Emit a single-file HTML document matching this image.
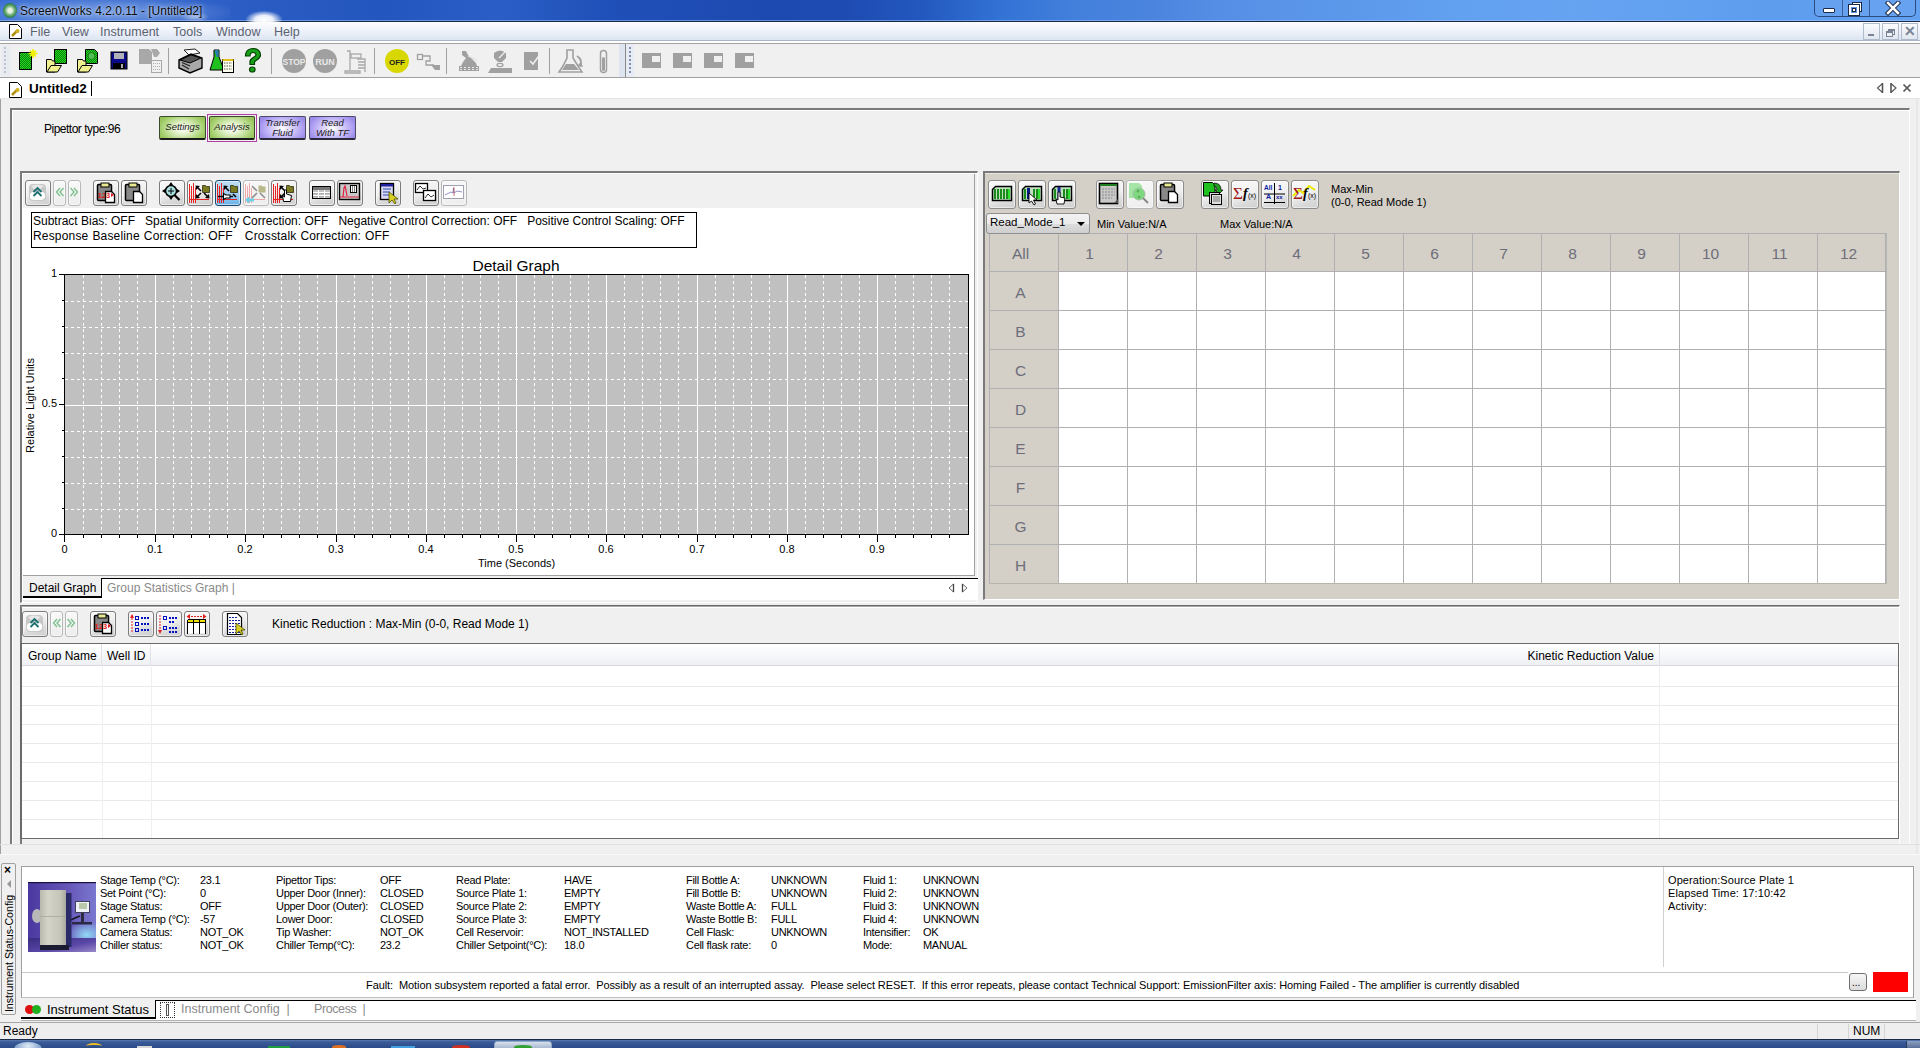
<!DOCTYPE html>
<html><head><meta charset="utf-8">
<style>
*{box-sizing:border-box;margin:0;padding:0}
html,body{width:1920px;height:1048px;overflow:hidden;background:#f0f0f0;font-family:"Liberation Sans",sans-serif;font-size:12px;color:#000;position:relative}
.a{position:absolute}
.t{position:absolute;white-space:pre;line-height:1}
.ms{letter-spacing:-0.5px}
.btn{position:absolute;border:1px solid #8a8a8a;border-radius:3px;background:linear-gradient(#f4f4f4,#dedede)}
.tb{position:absolute;border:1px solid #9a9a9a;border-radius:4px;background:#e8e8e8}
.gh{position:absolute;white-space:pre;line-height:1;font-size:15.5px;color:#6e6e7a;text-align:center}
.st{position:absolute;white-space:pre;line-height:1;font-size:11px;letter-spacing:-0.3px}
</style></head><body>

<!-- Title bar -->
<div class="a" style="left:0;top:0;width:1920px;height:22px;background:linear-gradient(90deg,#3a6ed2 0%,#3466cc 8%,#2a5cc4 13%,#2456bf 20%,#2a5ec6 26%,#1f4fb8 32%,#1c4ab0 40%,#1d4bb2 44%,#2358be 48%,#3272d4 52%,#4380dc 56%,#4a84de 60%,#5690e6 64%,#5c98ea 70%,#62a0f0 76%,#66a4f2 82%,#5e9cee 92%,#62a0f0 100%);border-bottom:1px solid #1a2a44"></div>
<div class="a" style="left:0;top:20px;width:1920px;height:1px;background:rgba(160,200,255,.55)"></div>
<div class="a" style="left:0px;top:0px;width:230px;height:21px;background:radial-gradient(ellipse 60% 80% at 45% 60%,rgba(190,215,250,.45) 0%,rgba(190,215,250,.25) 55%,rgba(190,215,250,0) 100%)"></div>
<div class="a" style="left:246px;top:11px;width:36px;height:11px;border-radius:50% 50% 0 0;background:radial-gradient(ellipse at 50% 80%,rgba(255,255,255,1) 0%,rgba(255,255,255,.9) 35%,rgba(255,255,255,0) 75%)"></div>
<div class="a" style="left:180px;top:12px;width:30px;height:10px;border-radius:50%;background:radial-gradient(ellipse at center,rgba(255,255,255,.5) 0%,rgba(255,255,255,0) 70%)"></div>
<div class="a" style="left:3px;top:3px;width:14px;height:15px;border-radius:50%;background:radial-gradient(circle at 50% 50%,#e8f2e0 20%,#6fb07a 45%,#2a7a48 70%,#1a5a34 100%)"></div>
<div class="t" style="left:20px;top:5px;font-size:12px;color:#0a0a0a;text-shadow:0 0 5px rgba(220,235,255,.9),0 0 2px rgba(220,235,255,.6)">ScreenWorks 4.2.0.11 - [Untitled2]</div>
<!-- caption buttons -->
<div class="a" style="left:1814px;top:-2px;width:102px;height:19px;border:1px solid #2a4a80;border-top:none;border-radius:0 0 5px 5px;background:rgba(120,170,240,.25)"></div>
<div class="a" style="left:1842px;top:0px;width:1px;height:16px;background:#3a5e98"></div>
<div class="a" style="left:1869px;top:0px;width:1px;height:16px;background:#3a5e98"></div>
<div class="a" style="left:1823px;top:8px;width:12px;height:5px;background:#fff;border:1px solid #1d2a44;border-radius:1px"></div>
<div class="a" style="left:1852px;top:2px;width:10px;height:10px;border:1px solid #1d2a44;background:#fff"></div>
<div class="a" style="left:1849px;top:5px;width:10px;height:10px;border:2px solid #fff;outline:1px solid #1d2a44;background:#5a92e0"></div>
<div class="a" style="left:1852px;top:8px;width:4px;height:4px;border:1px solid #1d2a44;background:#fff"></div>
<svg class="a" style="left:1884px;top:1px" width="18" height="15"><path d="M4 2 L14 12 M14 2 L4 12" stroke="#1d2a44" stroke-width="4.5" stroke-linecap="square"/><path d="M4 2 L14 12 M14 2 L4 12" stroke="#fff" stroke-width="2.5" stroke-linecap="square"/></svg>

<!-- Menu bar -->
<div class="a" style="left:0;top:22px;width:1920px;height:19px;background:linear-gradient(#fdfdff,#eef2fa 50%,#dde5f2);border-bottom:1px solid #a9b4c6"></div>
<div class="a" style="left:0;top:41px;width:1920px;height:2px;background:#fff"></div>
<div class="t" style="left:30px;top:26px;font-size:12.5px;color:#5c6270">File</div>
<div class="t" style="left:62px;top:26px;font-size:12.5px;color:#5c6270">View</div>
<div class="t" style="left:100px;top:26px;font-size:12.5px;color:#5c6270">Instrument</div>
<div class="t" style="left:173px;top:26px;font-size:12.5px;color:#5c6270">Tools</div>
<div class="t" style="left:216px;top:26px;font-size:12.5px;color:#5c6270">Window</div>
<div class="t" style="left:274px;top:26px;font-size:12.5px;color:#5c6270">Help</div>
<!-- MDI buttons -->
<div class="a" style="left:1863px;top:23px;width:17px;height:17px;border:1px solid #b0bccc;background:linear-gradient(#fafbfd,#e0e6f0)"></div>
<div class="a" style="left:1882px;top:23px;width:17px;height:17px;border:1px solid #b0bccc;background:linear-gradient(#fafbfd,#e0e6f0)"></div>
<div class="a" style="left:1901px;top:23px;width:17px;height:17px;border:1px solid #b0bccc;background:linear-gradient(#fafbfd,#e0e6f0)"></div>
<div class="a" style="left:1868px;top:34px;width:6px;height:2px;background:#7a8494"></div>
<div class="a" style="left:1888px;top:29px;width:7px;height:6px;border:1px solid #7a8494;border-top-width:2px"></div>
<div class="a" style="left:1886px;top:31px;width:7px;height:6px;border:1px solid #7a8494;border-top-width:2px;background:#eef1f6"></div>
<div class="t" style="left:1904px;top:24px;font-size:14px;font-weight:bold;color:#7a8494">✕</div>

<!-- Toolbar -->
<div class="a" style="left:0;top:43px;width:1920px;height:1px;background:#a0a0a0"></div>
<div class="a" style="left:0;top:44px;width:1920px;height:33px;background:#f0f0f0"></div>
<div class="a" style="left:0;top:77px;width:1920px;height:1px;background:#a0a0a0"></div>

<!-- Doc tab strip -->
<div class="a" style="left:0;top:78px;width:1920px;height:20px;background:#fff"></div>
<div class="t" style="left:29px;top:82px;font-size:13.5px;font-weight:bold;color:#000">Untitled2</div>
<div class="a" style="left:91px;top:81px;width:1px;height:15px;background:#000"></div>
<svg class="a" style="left:1870px;top:80px" width="48" height="16"><path d="M12.5 3.5 L7.5 8 L12.5 12.5" fill="none" stroke="#555" stroke-width="1.1"/><path d="M12.5 3v10" stroke="#555" stroke-width="1.6"/><path d="M21 3.5 L26 8 L21 12.5" fill="none" stroke="#555" stroke-width="1.1"/><path d="M21 3v10" stroke="#555" stroke-width="1.6"/><path d="M33.5 4.5 L40.5 11.5 M40.5 4.5 L33.5 11.5" stroke="#555" stroke-width="1.7"/></svg>
<div class="a" style="left:0;top:98px;width:1920px;height:1px;background:#e4e4e4"></div>

<!-- left edge lines -->
<div class="a" style="left:0;top:99px;width:1px;height:755px;background:#a0a0a0"></div>
<div class="a" style="left:1916px;top:99px;width:4px;height:755px;background:linear-gradient(90deg,#e4e4e4,#f4f4f4)"></div>

<!-- Doc frame -->
<div class="a" style="left:10px;top:108px;width:1900px;height:737px;border-top:2px solid #7a7a7a;border-left:2px solid #7a7a7a;border-right:1px solid #fff;border-bottom:1px solid #fff"></div>
<div class="a" style="left:12px;top:110px;width:1897px;height:734px;border-top:1px solid #fff;border-left:1px solid #fff"></div>

<div class="t ms" style="left:44px;top:123px;font-size:12px">Pipettor type:96</div>

<!-- Pipettor buttons -->
<div class="a" style="left:159px;top:116px;width:47px;height:24px;border:1px solid #3a4a2a;border-bottom:2px solid #1a1a1a;border-radius:2px;background:radial-gradient(ellipse 55% 75% at 50% 55%,#ffffff 0%,#e4f2cc 35%,#a6d070 85%,#98c45c 100%)"></div>
<div class="t" style="left:159px;top:122px;width:47px;text-align:center;font-size:9.5px;font-style:italic;color:#1a1a1a">Settings</div>
<div class="a" style="left:207px;top:114px;width:50px;height:28px;border:1px solid #b040a0"></div>
<div class="a" style="left:209px;top:116px;width:46px;height:24px;border:1px solid #3a4a2a;border-bottom:2px solid #1a1a1a;border-radius:2px;background:radial-gradient(ellipse 55% 75% at 50% 55%,#ffffff 0%,#e4f2cc 35%,#a6d070 85%,#98c45c 100%)"></div>
<div class="t" style="left:209px;top:122px;width:46px;text-align:center;font-size:9.5px;font-style:italic;color:#1a1a1a">Analysis</div>
<div class="a" style="left:259px;top:116px;width:47px;height:24px;border:1px solid #4a4a6a;border-bottom:2px solid #2a2a3a;border-radius:2px;background:radial-gradient(ellipse 55% 75% at 50% 55%,#ffffff 0%,#dcd4fc 35%,#ac9cf2 85%,#9c8ce8 100%)"></div>
<div class="t" style="left:259px;top:118px;width:47px;text-align:center;font-size:9.5px;line-height:10px;font-style:italic;color:#1a1a1a">Transfer
Fluid</div>
<div class="a" style="left:309px;top:116px;width:47px;height:24px;border:1px solid #4a4a6a;border-bottom:2px solid #2a2a3a;border-radius:2px;background:radial-gradient(ellipse 55% 75% at 50% 55%,#ffffff 0%,#dcd4fc 35%,#ac9cf2 85%,#9c8ce8 100%)"></div>
<div class="t" style="left:309px;top:118px;width:47px;text-align:center;font-size:9.5px;line-height:10px;font-style:italic;color:#1a1a1a">Read
With TF</div>

<!-- Left graph panel -->
<div class="a" style="left:20px;top:171px;width:958px;height:432px;border-top:2px solid #7a7a7a;border-left:2px solid #7a7a7a;border-right:1px solid #fff;border-bottom:1px solid #fff"></div>
<div class="a" style="left:22px;top:173px;width:955px;height:429px;border-top:1px solid #fff;border-left:1px solid #fff"></div>
<div class="a" style="left:23px;top:174px;width:952px;height:402px;background:#fff;border:1px solid #a0a0a0;border-top:none;border-left:none"></div>
<div class="a" style="left:23px;top:174px;width:951px;height:34px;background:#f0f0f0"></div>

<!-- correction info box -->
<div class="a" style="left:31px;top:212px;width:666px;height:36px;border:1px solid #000;background:#fff"></div>
<div class="t" style="left:33px;top:215px;font-size:12px">Subtract Bias: OFF   Spatial Uniformity Correction: OFF   Negative Control Correction: OFF   Positive Control Scaling: OFF</div>
<div class="t" style="left:33px;top:230px;font-size:12px;letter-spacing:0.17px;word-spacing:0.5px">Response Baseline Correction: OFF   Crosstalk Correction: OFF</div>
<div class="t" style="left:416px;top:258px;width:200px;text-align:center;font-size:15.5px">Detail Graph</div>
<div class="t" style="left:478px;top:558px;font-size:11px">Time (Seconds)</div>
<div class="t" style="left:-17px;top:400px;width:95px;font-size:11px;transform:rotate(-90deg);transform-origin:47.5px 5.5px;text-align:center">Relative Light Units</div>

<svg class="a" style="left:0;top:0" width="980" height="600" shape-rendering="crispEdges">
<rect x="64" y="274" width="904" height="260" fill="#c0c0c0"/>
<line x1="83.5" y1="275" x2="83.5" y2="534" stroke="#fff" stroke-width="1" stroke-dasharray="3 3"/>
<line x1="101.5" y1="275" x2="101.5" y2="534" stroke="#fff" stroke-width="1" stroke-dasharray="3 3"/>
<line x1="119.5" y1="275" x2="119.5" y2="534" stroke="#fff" stroke-width="1" stroke-dasharray="3 3"/>
<line x1="137.5" y1="275" x2="137.5" y2="534" stroke="#fff" stroke-width="1" stroke-dasharray="3 3"/>
<rect x="155" y="275" width="1" height="259" fill="#fff"/>
<line x1="173.5" y1="275" x2="173.5" y2="534" stroke="#fff" stroke-width="1" stroke-dasharray="3 3"/>
<line x1="191.5" y1="275" x2="191.5" y2="534" stroke="#fff" stroke-width="1" stroke-dasharray="3 3"/>
<line x1="209.5" y1="275" x2="209.5" y2="534" stroke="#fff" stroke-width="1" stroke-dasharray="3 3"/>
<line x1="227.5" y1="275" x2="227.5" y2="534" stroke="#fff" stroke-width="1" stroke-dasharray="3 3"/>
<rect x="245" y="275" width="1" height="259" fill="#fff"/>
<line x1="263.5" y1="275" x2="263.5" y2="534" stroke="#fff" stroke-width="1" stroke-dasharray="3 3"/>
<line x1="281.5" y1="275" x2="281.5" y2="534" stroke="#fff" stroke-width="1" stroke-dasharray="3 3"/>
<line x1="299.5" y1="275" x2="299.5" y2="534" stroke="#fff" stroke-width="1" stroke-dasharray="3 3"/>
<line x1="317.5" y1="275" x2="317.5" y2="534" stroke="#fff" stroke-width="1" stroke-dasharray="3 3"/>
<rect x="336" y="275" width="1" height="259" fill="#fff"/>
<line x1="354.5" y1="275" x2="354.5" y2="534" stroke="#fff" stroke-width="1" stroke-dasharray="3 3"/>
<line x1="372.5" y1="275" x2="372.5" y2="534" stroke="#fff" stroke-width="1" stroke-dasharray="3 3"/>
<line x1="390.5" y1="275" x2="390.5" y2="534" stroke="#fff" stroke-width="1" stroke-dasharray="3 3"/>
<line x1="408.5" y1="275" x2="408.5" y2="534" stroke="#fff" stroke-width="1" stroke-dasharray="3 3"/>
<rect x="426" y="275" width="1" height="259" fill="#fff"/>
<line x1="444.5" y1="275" x2="444.5" y2="534" stroke="#fff" stroke-width="1" stroke-dasharray="3 3"/>
<line x1="462.5" y1="275" x2="462.5" y2="534" stroke="#fff" stroke-width="1" stroke-dasharray="3 3"/>
<line x1="480.5" y1="275" x2="480.5" y2="534" stroke="#fff" stroke-width="1" stroke-dasharray="3 3"/>
<line x1="498.5" y1="275" x2="498.5" y2="534" stroke="#fff" stroke-width="1" stroke-dasharray="3 3"/>
<rect x="516" y="275" width="1" height="259" fill="#fff"/>
<line x1="534.5" y1="275" x2="534.5" y2="534" stroke="#fff" stroke-width="1" stroke-dasharray="3 3"/>
<line x1="552.5" y1="275" x2="552.5" y2="534" stroke="#fff" stroke-width="1" stroke-dasharray="3 3"/>
<line x1="570.5" y1="275" x2="570.5" y2="534" stroke="#fff" stroke-width="1" stroke-dasharray="3 3"/>
<line x1="588.5" y1="275" x2="588.5" y2="534" stroke="#fff" stroke-width="1" stroke-dasharray="3 3"/>
<rect x="606" y="275" width="1" height="259" fill="#fff"/>
<line x1="624.5" y1="275" x2="624.5" y2="534" stroke="#fff" stroke-width="1" stroke-dasharray="3 3"/>
<line x1="642.5" y1="275" x2="642.5" y2="534" stroke="#fff" stroke-width="1" stroke-dasharray="3 3"/>
<line x1="660.5" y1="275" x2="660.5" y2="534" stroke="#fff" stroke-width="1" stroke-dasharray="3 3"/>
<line x1="678.5" y1="275" x2="678.5" y2="534" stroke="#fff" stroke-width="1" stroke-dasharray="3 3"/>
<rect x="697" y="275" width="1" height="259" fill="#fff"/>
<line x1="715.5" y1="275" x2="715.5" y2="534" stroke="#fff" stroke-width="1" stroke-dasharray="3 3"/>
<line x1="733.5" y1="275" x2="733.5" y2="534" stroke="#fff" stroke-width="1" stroke-dasharray="3 3"/>
<line x1="751.5" y1="275" x2="751.5" y2="534" stroke="#fff" stroke-width="1" stroke-dasharray="3 3"/>
<line x1="769.5" y1="275" x2="769.5" y2="534" stroke="#fff" stroke-width="1" stroke-dasharray="3 3"/>
<rect x="787" y="275" width="1" height="259" fill="#fff"/>
<line x1="805.5" y1="275" x2="805.5" y2="534" stroke="#fff" stroke-width="1" stroke-dasharray="3 3"/>
<line x1="823.5" y1="275" x2="823.5" y2="534" stroke="#fff" stroke-width="1" stroke-dasharray="3 3"/>
<line x1="841.5" y1="275" x2="841.5" y2="534" stroke="#fff" stroke-width="1" stroke-dasharray="3 3"/>
<line x1="859.5" y1="275" x2="859.5" y2="534" stroke="#fff" stroke-width="1" stroke-dasharray="3 3"/>
<rect x="877" y="275" width="1" height="259" fill="#fff"/>
<line x1="895.5" y1="275" x2="895.5" y2="534" stroke="#fff" stroke-width="1" stroke-dasharray="3 3"/>
<line x1="913.5" y1="275" x2="913.5" y2="534" stroke="#fff" stroke-width="1" stroke-dasharray="3 3"/>
<line x1="931.5" y1="275" x2="931.5" y2="534" stroke="#fff" stroke-width="1" stroke-dasharray="3 3"/>
<line x1="949.5" y1="275" x2="949.5" y2="534" stroke="#fff" stroke-width="1" stroke-dasharray="3 3"/>
<line x1="65" y1="301.5" x2="968" y2="301.5" stroke="#fff" stroke-width="1" stroke-dasharray="3 3"/>
<line x1="65" y1="327.5" x2="968" y2="327.5" stroke="#fff" stroke-width="1" stroke-dasharray="3 3"/>
<line x1="65" y1="353.5" x2="968" y2="353.5" stroke="#fff" stroke-width="1" stroke-dasharray="3 3"/>
<line x1="65" y1="379.5" x2="968" y2="379.5" stroke="#fff" stroke-width="1" stroke-dasharray="3 3"/>
<rect x="65" y="405" width="903" height="1" fill="#fff"/>
<line x1="65" y1="431.5" x2="968" y2="431.5" stroke="#fff" stroke-width="1" stroke-dasharray="3 3"/>
<line x1="65" y1="457.5" x2="968" y2="457.5" stroke="#fff" stroke-width="1" stroke-dasharray="3 3"/>
<line x1="65" y1="483.5" x2="968" y2="483.5" stroke="#fff" stroke-width="1" stroke-dasharray="3 3"/>
<line x1="65" y1="509.5" x2="968" y2="509.5" stroke="#fff" stroke-width="1" stroke-dasharray="3 3"/>
<rect x="64" y="274" width="905" height="1" fill="#000"/>
<rect x="968" y="274" width="1" height="261" fill="#000"/>
<rect x="64" y="274" width="1" height="261" fill="#000"/>
<rect x="64" y="534" width="905" height="1" fill="#000"/>
<rect x="64" y="535" width="1" height="7" fill="#000"/>
<rect x="83" y="535" width="1" height="3" fill="#000"/>
<rect x="101" y="535" width="1" height="3" fill="#000"/>
<rect x="119" y="535" width="1" height="3" fill="#000"/>
<rect x="137" y="535" width="1" height="3" fill="#000"/>
<rect x="155" y="535" width="1" height="7" fill="#000"/>
<rect x="173" y="535" width="1" height="3" fill="#000"/>
<rect x="191" y="535" width="1" height="3" fill="#000"/>
<rect x="209" y="535" width="1" height="3" fill="#000"/>
<rect x="227" y="535" width="1" height="3" fill="#000"/>
<rect x="245" y="535" width="1" height="7" fill="#000"/>
<rect x="263" y="535" width="1" height="3" fill="#000"/>
<rect x="281" y="535" width="1" height="3" fill="#000"/>
<rect x="299" y="535" width="1" height="3" fill="#000"/>
<rect x="317" y="535" width="1" height="3" fill="#000"/>
<rect x="336" y="535" width="1" height="7" fill="#000"/>
<rect x="354" y="535" width="1" height="3" fill="#000"/>
<rect x="372" y="535" width="1" height="3" fill="#000"/>
<rect x="390" y="535" width="1" height="3" fill="#000"/>
<rect x="408" y="535" width="1" height="3" fill="#000"/>
<rect x="426" y="535" width="1" height="7" fill="#000"/>
<rect x="444" y="535" width="1" height="3" fill="#000"/>
<rect x="462" y="535" width="1" height="3" fill="#000"/>
<rect x="480" y="535" width="1" height="3" fill="#000"/>
<rect x="498" y="535" width="1" height="3" fill="#000"/>
<rect x="516" y="535" width="1" height="7" fill="#000"/>
<rect x="534" y="535" width="1" height="3" fill="#000"/>
<rect x="552" y="535" width="1" height="3" fill="#000"/>
<rect x="570" y="535" width="1" height="3" fill="#000"/>
<rect x="588" y="535" width="1" height="3" fill="#000"/>
<rect x="606" y="535" width="1" height="7" fill="#000"/>
<rect x="624" y="535" width="1" height="3" fill="#000"/>
<rect x="642" y="535" width="1" height="3" fill="#000"/>
<rect x="660" y="535" width="1" height="3" fill="#000"/>
<rect x="678" y="535" width="1" height="3" fill="#000"/>
<rect x="697" y="535" width="1" height="7" fill="#000"/>
<rect x="715" y="535" width="1" height="3" fill="#000"/>
<rect x="733" y="535" width="1" height="3" fill="#000"/>
<rect x="751" y="535" width="1" height="3" fill="#000"/>
<rect x="769" y="535" width="1" height="3" fill="#000"/>
<rect x="787" y="535" width="1" height="7" fill="#000"/>
<rect x="805" y="535" width="1" height="3" fill="#000"/>
<rect x="823" y="535" width="1" height="3" fill="#000"/>
<rect x="841" y="535" width="1" height="3" fill="#000"/>
<rect x="859" y="535" width="1" height="3" fill="#000"/>
<rect x="877" y="535" width="1" height="7" fill="#000"/>
<rect x="895" y="535" width="1" height="3" fill="#000"/>
<rect x="913" y="535" width="1" height="3" fill="#000"/>
<rect x="931" y="535" width="1" height="3" fill="#000"/>
<rect x="949" y="535" width="1" height="3" fill="#000"/>
<rect x="59" y="274" width="5" height="1" fill="#000"/>
<rect x="62" y="300" width="2" height="1" fill="#000"/>
<rect x="62" y="326" width="2" height="1" fill="#000"/>
<rect x="62" y="352" width="2" height="1" fill="#000"/>
<rect x="62" y="378" width="2" height="1" fill="#000"/>
<rect x="59" y="404" width="5" height="1" fill="#000"/>
<rect x="62" y="430" width="2" height="1" fill="#000"/>
<rect x="62" y="456" width="2" height="1" fill="#000"/>
<rect x="62" y="482" width="2" height="1" fill="#000"/>
<rect x="62" y="508" width="2" height="1" fill="#000"/>
<rect x="59" y="534" width="5" height="1" fill="#000"/>
</svg>
<div class="t" style="left:34.5px;top:544px;width:60px;text-align:center;font-size:11px">0</div>
<div class="t" style="left:125px;top:544px;width:60px;text-align:center;font-size:11px">0.1</div>
<div class="t" style="left:215px;top:544px;width:60px;text-align:center;font-size:11px">0.2</div>
<div class="t" style="left:306px;top:544px;width:60px;text-align:center;font-size:11px">0.3</div>
<div class="t" style="left:396px;top:544px;width:60px;text-align:center;font-size:11px">0.4</div>
<div class="t" style="left:486px;top:544px;width:60px;text-align:center;font-size:11px">0.5</div>
<div class="t" style="left:576px;top:544px;width:60px;text-align:center;font-size:11px">0.6</div>
<div class="t" style="left:667px;top:544px;width:60px;text-align:center;font-size:11px">0.7</div>
<div class="t" style="left:757px;top:544px;width:60px;text-align:center;font-size:11px">0.8</div>
<div class="t" style="left:847px;top:544px;width:60px;text-align:center;font-size:11px">0.9</div>
<div class="t" style="left:17px;top:268px;width:40px;text-align:right;font-size:11px">1</div>
<div class="t" style="left:17px;top:398px;width:40px;text-align:right;font-size:11px">0.5</div>
<div class="t" style="left:17px;top:528px;width:40px;text-align:right;font-size:11px">0</div>
<div class="a" style="left:983px;top:171px;width:917px;height:429px;background:#d4d0c8;border-top:2px solid #7a7a7a;border-left:2px solid #7a7a7a;border-right:1px solid #fff;border-bottom:1px solid #fff"></div>
<div class="a" style="left:985px;top:173px;width:914px;height:1px;background:#e8e6e0"></div>
<svg class="a" style="left:0;top:0" width="1920" height="600" shape-rendering="crispEdges">
<rect x="1058" y="271" width="828" height="312" fill="#fff"/>
<rect x="989" y="233" width="69" height="350" fill="#d4d0c8"/>
<rect x="1058" y="233" width="828" height="38" fill="#d4d0c8"/>
<rect x="989" y="233" width="1" height="350" fill="#b0b0b0"/>
<rect x="1058" y="233" width="1" height="350" fill="#b0b0b0"/>
<rect x="1127" y="233" width="1" height="350" fill="#b0b0b0"/>
<rect x="1196" y="233" width="1" height="350" fill="#b0b0b0"/>
<rect x="1265" y="233" width="1" height="350" fill="#b0b0b0"/>
<rect x="1334" y="233" width="1" height="350" fill="#b0b0b0"/>
<rect x="1403" y="233" width="1" height="350" fill="#b0b0b0"/>
<rect x="1472" y="233" width="1" height="350" fill="#b0b0b0"/>
<rect x="1541" y="233" width="1" height="350" fill="#b0b0b0"/>
<rect x="1610" y="233" width="1" height="350" fill="#b0b0b0"/>
<rect x="1679" y="233" width="1" height="350" fill="#b0b0b0"/>
<rect x="1748" y="233" width="1" height="350" fill="#b0b0b0"/>
<rect x="1817" y="233" width="1" height="350" fill="#b0b0b0"/>
<rect x="1885" y="233" width="1" height="350" fill="#b0b0b0"/>
<rect x="1886" y="233" width="1" height="350" fill="#b8b8b8"/>
<rect x="989" y="233" width="898" height="1" fill="#b0b0b0"/>
<rect x="989" y="271" width="898" height="1" fill="#b0b0b0"/>
<rect x="989" y="310" width="898" height="1" fill="#b0b0b0"/>
<rect x="989" y="349" width="898" height="1" fill="#b0b0b0"/>
<rect x="989" y="388" width="898" height="1" fill="#b0b0b0"/>
<rect x="989" y="427" width="898" height="1" fill="#b0b0b0"/>
<rect x="989" y="466" width="898" height="1" fill="#b0b0b0"/>
<rect x="989" y="505" width="898" height="1" fill="#b0b0b0"/>
<rect x="989" y="544" width="898" height="1" fill="#b0b0b0"/>
<rect x="989" y="583" width="898" height="1" fill="#b0b0b0"/>
<rect x="989" y="583" width="898" height="1" fill="#b8b4ac"/>
</svg>
<div class="gh" style="left:986px;top:246px;width:69px">All</div>
<div class="gh" style="left:1055px;top:246px;width:69px">1</div>
<div class="gh" style="left:1124px;top:246px;width:69px">2</div>
<div class="gh" style="left:1193px;top:246px;width:69px">3</div>
<div class="gh" style="left:1262px;top:246px;width:69px">4</div>
<div class="gh" style="left:1331px;top:246px;width:69px">5</div>
<div class="gh" style="left:1400px;top:246px;width:69px">6</div>
<div class="gh" style="left:1469px;top:246px;width:69px">7</div>
<div class="gh" style="left:1538px;top:246px;width:69px">8</div>
<div class="gh" style="left:1607px;top:246px;width:69px">9</div>
<div class="gh" style="left:1676px;top:246px;width:69px">10</div>
<div class="gh" style="left:1745px;top:246px;width:69px">11</div>
<div class="gh" style="left:1814px;top:246px;width:69px">12</div>
<div class="gh" style="left:986px;top:285px;width:69px">A</div>
<div class="gh" style="left:986px;top:324px;width:69px">B</div>
<div class="gh" style="left:986px;top:363px;width:69px">C</div>
<div class="gh" style="left:986px;top:402px;width:69px">D</div>
<div class="gh" style="left:986px;top:441px;width:69px">E</div>
<div class="gh" style="left:986px;top:480px;width:69px">F</div>
<div class="gh" style="left:986px;top:519px;width:69px">G</div>
<div class="gh" style="left:986px;top:558px;width:69px">H</div>
<div class="a" style="left:986px;top:213px;width:104px;height:21px;border:1px solid #8e8f8f;border-radius:3px;background:linear-gradient(#f2f2f2 0%,#ebebeb 50%,#dddddd 51%,#cfcfcf 100%)"></div>
<div class="t" style="left:990px;top:217px;font-size:11.5px">Read_Mode_1</div>
<div class="a" style="left:1077px;top:222px;width:0;height:0;border-left:4px solid transparent;border-right:4px solid transparent;border-top:4px solid #000"></div>
<div class="t" style="left:1097px;top:219px;font-size:11px">Min Value:N/A</div>
<div class="t" style="left:1220px;top:219px;font-size:11px">Max Value:N/A</div>
<div class="t" style="left:1331px;top:183px;font-size:11px;line-height:13px">Max-Min
(0-0, Read Mode 1)</div>
<!-- graph tabs -->
<div class="a" style="left:23px;top:578px;width:955px;height:22px;background:#fff;border-top:1px solid #000"></div>
<div class="a" style="left:23px;top:578px;width:79px;height:20px;background:#f0f0f0;border-right:1px solid #000;border-bottom:2px solid #000"></div>
<div class="t" style="left:29px;top:582px;font-size:12px">Detail Graph</div>
<div class="t" style="left:107px;top:582px;font-size:12px;color:#8a8a8a">Group Statistics Graph |</div>
<svg class="a" style="left:945px;top:581px" width="25" height="14"><path d="M8.5 3 L4 7 L8.5 11Z" fill="none" stroke="#666" stroke-width="1"/><path d="M8.5 3v8" stroke="#444" stroke-width="1.3"/><path d="M17.5 3 L22 7 L17.5 11Z" fill="none" stroke="#666" stroke-width="1"/><path d="M17.5 3v8" stroke="#444" stroke-width="1.3"/></svg>

<div class="a" style="left:20px;top:605px;width:1880px;height:240px;border-top:1px solid #6a6a6a;border-left:2px solid #7a7a7a;border-right:1px solid #fff;border-bottom:1px solid #fff"></div><div class="a" style="left:21px;top:606px;width:1878px;height:1px;background:#a8a8a8"></div>
<div class="a" style="left:22px;top:607px;width:1877px;height:1px;background:#fff"></div>
<div class="a" style="left:20px;top:643px;width:1879px;height:196px;background:#fff;border-top:1px solid #6a6a6a;border-left:2px solid #6a6a6a;border-bottom:1px solid #6a6a6a;border-right:1px solid #6a6a6a"></div>
<div class="a" style="left:22px;top:644px;width:1876px;height:22px;background:linear-gradient(#ffffff 0%,#f7f8fa 50%,#eef0f3 100%);border-bottom:1px solid #d8dade"></div>
<div class="a" style="left:101px;top:644px;width:1px;height:22px;background:#e0e2e6"></div>
<div class="a" style="left:150px;top:644px;width:1px;height:22px;background:#e0e2e6"></div>
<div class="a" style="left:1659px;top:644px;width:1px;height:22px;background:#e0e2e6"></div>
<div class="a" style="left:22px;top:686px;width:1876px;height:1px;background:#eaeaea"></div>
<div class="a" style="left:22px;top:705px;width:1876px;height:1px;background:#eaeaea"></div>
<div class="a" style="left:22px;top:724px;width:1876px;height:1px;background:#eaeaea"></div>
<div class="a" style="left:22px;top:743px;width:1876px;height:1px;background:#eaeaea"></div>
<div class="a" style="left:22px;top:762px;width:1876px;height:1px;background:#eaeaea"></div>
<div class="a" style="left:22px;top:781px;width:1876px;height:1px;background:#eaeaea"></div>
<div class="a" style="left:22px;top:800px;width:1876px;height:1px;background:#eaeaea"></div>
<div class="a" style="left:22px;top:819px;width:1876px;height:1px;background:#eaeaea"></div>
<div class="a" style="left:102px;top:667px;width:1px;height:171px;background:#efefef"></div>
<div class="a" style="left:151px;top:667px;width:1px;height:171px;background:#efefef"></div>
<div class="a" style="left:1659px;top:667px;width:1px;height:171px;background:#efefef"></div>
<div class="t" style="left:28px;top:650px;font-size:12px">Group Name</div>
<div class="t" style="left:107px;top:650px;font-size:12px">Well ID</div>
<div class="t" style="left:1454px;top:650px;width:200px;text-align:right;font-size:12px">Kinetic Reduction Value</div>
<div class="t" style="left:272px;top:618px;font-size:12px">Kinetic Reduction : Max-Min (0-0, Read Mode 1)</div>
<!-- bottom area -->
<div class="a" style="left:0;top:844px;width:1920px;height:1px;background:#e0e0e0"></div><div class="a" style="left:0;top:854px;width:1920px;height:1px;background:#fafafa"></div>
<!-- side tab -->
<div class="a" style="left:1px;top:863px;width:15px;height:152px;border:1px solid #a0a0a0;border-radius:2px;background:#f0f0f0"></div>
<div class="t" style="left:4px;top:864px;font-size:12px;font-weight:bold">×</div>
<div class="a" style="left:7px;top:880px;width:0;height:0;border-top:4px solid transparent;border-bottom:4px solid transparent;border-right:4px solid #999"></div>
<div class="t" style="left:-50px;top:947px;width:120px;height:13px;font-size:10.6px;transform:rotate(-90deg);transform-origin:60px 6.5px;text-align:center">Instrument Status-Config</div>

<!-- status panel -->
<div class="a" style="left:21px;top:866px;width:1893px;height:132px;background:#fff;border-top:1px solid #a0a0a0;border-left:1px solid #a0a0a0;border-right:1px solid #a0a0a0;border-bottom:1px solid #c0c0c0"></div>
<div class="a" style="left:22px;top:972px;width:1826px;height:1px;background:#c8c8c8"></div>
<div class="a" style="left:1663px;top:867px;width:1px;height:100px;background:#d0d0d0"></div>

<!-- instrument picture -->
<svg class="a" style="left:28px;top:882px" width="68" height="70">
<defs>
<linearGradient id="ipbg" x1="0" y1="0" x2="1" y2="0"><stop offset="0" stop-color="#4a38a0"/><stop offset=".6" stop-color="#6858b8"/><stop offset="1" stop-color="#7a78d0"/></linearGradient>
<radialGradient id="ipglow" cx=".75" cy=".85" r=".5"><stop offset="0" stop-color="#90d8f4" stop-opacity="1"/><stop offset="1" stop-color="#90d8f4" stop-opacity="0"/></radialGradient>
<linearGradient id="ipfloor" x1="0" y1="0" x2="1" y2="1"><stop offset="0" stop-color="#3a2c80"/><stop offset=".6" stop-color="#5a48a8"/><stop offset="1" stop-color="#9888c8"/></linearGradient>
<linearGradient id="ipcab" x1="0" y1="0" x2="1" y2="0"><stop offset="0" stop-color="#b8b8ac"/><stop offset=".3" stop-color="#d4d4c8"/><stop offset=".8" stop-color="#c4c4b8"/><stop offset="1" stop-color="#a8a8a0"/></linearGradient>
</defs>
<rect width="68" height="70" fill="url(#ipbg)"/>
<rect x="30" y="30" width="38" height="27" fill="url(#ipglow)"/>
<rect y="56" width="68" height="14" fill="url(#ipfloor)"/>
<rect width="68" height="1.2" fill="#1a1040"/>
<ellipse cx="9" cy="34" rx="5" ry="7" fill="#b8b8b8"/>
<rect x="12" y="8" width="26" height="55" fill="url(#ipcab)"/>
<rect x="12" y="34" width="26" height=".8" fill="#a8a89c"/>
<rect x="38" y="11" width="5.5" height="54" fill="#2a2a68"/>
<rect x="12" y="63" width="29" height="5" fill="#1a1a30"/>
<path d="M43 38 L47 36 L52 34" stroke="#1a1a2a" stroke-width="1.6" fill="none"/>
<rect x="47.5" y="19.5" width="14" height="11" fill="#f0f0f8" stroke="#404058" stroke-width="1"/>
<rect x="51" y="21" width="8" height="6" fill="#b8c8a8"/>
<rect x="44" y="40" width="20" height="2.5" fill="#2a2a48"/>
<rect x="53" y="31" width="3" height="9" fill="#2a2a40"/>
</svg>
<div class="st" style="left:100px;top:874px;line-height:13px">Stage Temp (°C):
Set Point (°C):
Stage Status:
Camera Temp (°C):
Camera Status:
Chiller status:</div>
<div class="st" style="left:200px;top:874px;line-height:13px">23.1
0
OFF
-57
NOT_OK
NOT_OK</div>
<div class="st" style="left:276px;top:874px;line-height:13px">Pipettor Tips:
Upper Door (Inner):
Upper Door (Outer):
Lower Door:
Tip Washer:
Chiller Temp(°C):</div>
<div class="st" style="left:380px;top:874px;line-height:13px">OFF
CLOSED
CLOSED
CLOSED
NOT_OK
23.2</div>
<div class="st" style="left:456px;top:874px;line-height:13px">Read Plate:
Source Plate 1:
Source Plate 2:
Source Plate 3:
Cell Reservoir:
Chiller Setpoint(°C):</div>
<div class="st" style="left:564px;top:874px;line-height:13px">HAVE
EMPTY
EMPTY
EMPTY
NOT_INSTALLED
18.0</div>
<div class="st" style="left:686px;top:874px;line-height:13px">Fill Bottle A:
Fill Bottle B:
Waste Bottle A:
Waste Bottle B:
Cell Flask:
Cell flask rate:</div>
<div class="st" style="left:771px;top:874px;line-height:13px">UNKNOWN
UNKNOWN
FULL
FULL
UNKNOWN
0</div>
<div class="st" style="left:863px;top:874px;line-height:13px">Fluid 1:
Fluid 2:
Fluid 3:
Fluid 4:
Intensifier:
Mode:</div>
<div class="st" style="left:923px;top:874px;line-height:13px">UNKNOWN
UNKNOWN
UNKNOWN
UNKNOWN
OK
MANUAL</div>
<div class="st" style="left:1668px;top:874px;line-height:13px;letter-spacing:0.1px">Operation:Source Plate 1
Elapsed Time: 17:10:42
Activity:</div>

<div class="t" style="left:366px;top:980px;font-size:11px;letter-spacing:-0.08px">Fault:  Motion subsystem reported a fatal error.  Possibly as a result of an interrupted assay.  Please select RESET.  If this error repeats, please contact Technical Support: EmissionFilter axis: Homing Failed - The amplifier is currently disabled</div>
<div class="a" style="left:1849px;top:973px;width:18px;height:18px;border:1px solid #707070;border-radius:3px;background:linear-gradient(#f6f6f6,#dcdcdc)"></div>
<div class="t" style="left:1852px;top:978px;font-size:10px">...</div>
<div class="a" style="left:1873px;top:972px;width:35px;height:20px;background:#ff0000"></div>

<!-- bottom tabs -->
<div class="a" style="left:21px;top:1000px;width:1895px;height:21px;background:#fff;border-top:1px solid #000;border-bottom:1px solid #b0b0b0"></div>
<div class="a" style="left:21px;top:1000px;width:135px;height:19px;background:#f0f0f0;border-right:1px solid #000;border-bottom:2px solid #000"></div>
<div class="a" style="left:25px;top:1005px;width:9px;height:9px;border-radius:50%;background:#e01010"></div>
<div class="a" style="left:32px;top:1005px;width:9px;height:9px;border-radius:50%;background:#20b020"></div>
<div class="t" style="left:47px;top:1003px;font-size:13px">Instrument Status</div>
<div class="a" style="left:160px;top:1002px;width:15px;height:16px;border:1px dotted #333"></div>
<div class="a" style="left:166px;top:1004px;width:3px;height:12px;border:1px solid #555"></div>
<div class="t" style="left:181px;top:1003px;font-size:12.5px;color:#8a8a8a">Instrument Config  |</div>
<div class="t" style="left:314px;top:1003px;font-size:12.5px;letter-spacing:-0.4px;color:#8a8a8a">Process  |</div>

<!-- status bar -->
<div class="a" style="left:0;top:1022px;width:1920px;height:18px;background:#efeeee;border-top:1px solid #a8a8a8"></div>
<div class="t" style="left:3px;top:1025px;font-size:12px">Ready</div>
<div class="a" style="left:1817px;top:1024px;width:1px;height:15px;background:#d4d4d4"></div>
<div class="a" style="left:1848px;top:1024px;width:1px;height:15px;background:#d4d4d4"></div>
<div class="a" style="left:1884px;top:1024px;width:1px;height:15px;background:#d4d4d4"></div>
<div class="t" style="left:1853px;top:1025px;font-size:12px">NUM</div>

<!-- taskbar -->
<div class="a" style="left:0;top:1039px;width:1920px;height:9px;background:linear-gradient(#1a2a48 0,#1a2a48 1px,#5a7ab0 1px,#3a5a98 3px,#2a4a88 9px)"></div>
<div class="a" style="left:14px;top:1042px;width:28px;height:14px;border-radius:50%;background:radial-gradient(ellipse at 50% 30%,#e0ecf8,#8aa8d0 60%,#4a6aa0)"></div>
<div class="a" style="left:86px;top:1043px;width:16px;height:6px;border-top:2px solid #f0c020;border-radius:50% 50% 0 0"></div>
<div class="a" style="left:137px;top:1046px;width:15px;height:3px;background:#d8d8d8"></div>
<div class="a" style="left:268px;top:1046px;width:22px;height:3px;background:#20a040"></div>
<div class="a" style="left:332px;top:1045px;width:14px;height:4px;border-radius:50% 50% 0 0;background:#e07020"></div>
<div class="a" style="left:391px;top:1046px;width:24px;height:3px;background:#40a0e0"></div>
<div class="a" style="left:452px;top:1045px;width:18px;height:4px;border-radius:50% 50% 0 0;background:#d03020"></div>
<div class="a" style="left:494px;top:1041px;width:58px;height:8px;border:1px solid #90a8c8;border-radius:3px 3px 0 0;background:linear-gradient(#d8e0ec,#a8b8d0)"></div>
<div class="a" style="left:514px;top:1045px;width:18px;height:4px;border-radius:50% 50% 0 0;background:#30a030"></div>
<div class="a" style="left:1906px;top:1041px;width:14px;height:7px;background:linear-gradient(#8aa0c0,#5a7098);border-left:1px solid #2a3a58"></div>


<!-- ===== main toolbar icons ===== -->
<svg class="a" style="left:0;top:0" width="780" height="80">
<defs>
<pattern id="gchk" width="2" height="2" patternUnits="userSpaceOnUse"><rect width="2" height="2" fill="#008a00"/><rect width="1" height="1" fill="#28d028"/><rect x="1" y="1" width="1" height="1" fill="#28d028"/></pattern>
</defs>
<!-- grip -->
<g fill="#9aa4b8"><rect x="4" y="47" width="2" height="2"/><rect x="4" y="51" width="2" height="2"/><rect x="4" y="55" width="2" height="2"/><rect x="4" y="59" width="2" height="2"/><rect x="4" y="63" width="2" height="2"/><rect x="4" y="67" width="2" height="2"/><rect x="4" y="71" width="2" height="2"/></g>
<rect x="1" y="45" width="10" height="31" fill="#e0e6f0" opacity=".5"/>
<!-- 1 new -->
<rect x="19.5" y="52.5" width="12" height="17" fill="url(#gchk)" stroke="#000"/>
<path d="M33 49 L33 58 M28.5 53.5 L37.5 53.5 M30 50.5 L36 56.5 M36 50.5 L30 56.5" stroke="#f0f000" stroke-width="1.6"/>
<!-- 2 open -->
<rect x="54.5" y="49.5" width="12" height="14" fill="url(#gchk)" stroke="#000"/>
<path d="M46.5 59.5 L51.5 59.5 L52.5 61 L55 61 L55 72 L46.5 72 Z" fill="#f0f090" stroke="#000"/>
<path d="M47 72 L51 65.5 L61.5 65.5 L57.5 72 Z" fill="#f0f090" stroke="#000"/>
<!-- 3 open2 -->
<path d="M85.5 49.5 L94.5 49.5 L97.5 52.5 L97.5 63.5 L85.5 63.5 Z" fill="url(#gchk)" stroke="#000"/>
<circle cx="91.5" cy="56" r="3.5" fill="#50c050" stroke="#208020"/>
<path d="M77.5 59.5 L82.5 59.5 L83.5 61 L86 61 L86 72 L77.5 72 Z" fill="#f0f090" stroke="#000"/>
<path d="M78 72 L82 65.5 L92.5 65.5 L88.5 72 Z" fill="#f0f090" stroke="#000"/>
<!-- 4 save -->
<rect x="111" y="52" width="16" height="17" fill="#0a0a8a" stroke="#000" stroke-width="1"/>
<rect x="114" y="53" width="10" height="6" fill="#b0b0b8"/>
<rect x="113" y="63" width="12" height="6" fill="#000"/>
<rect x="121" y="64" width="2" height="4" fill="#aaa"/>
<!-- 5 disabled -->
<path d="M139 49 L149 49 L152 52 L152 64 L139 64 Z" fill="#a8a8a8"/>
<path d="M151 49 L157 49 L160 53 L157 57 L154 57 Z" fill="#a8a8a8"/>
<rect x="151.5" y="60.5" width="10" height="12" fill="#f0f0f0" stroke="#a8a8a8"/>
<path d="M153 63.5h7M153 66.5h7M153 69.5h7" stroke="#b0b0b0" stroke-dasharray="1 1"/>
<rect x="168" y="48" width="1" height="26" fill="#a0a0a0"/>
<!-- 6 printer -->
<path d="M184 50 L195 49 L200 53 L189 55 Z" fill="#fff" stroke="#222"/>
<path d="M179 60 L191 54 L202 58 L202 68 L190 73 L179 68 Z" fill="#a8a8a8" stroke="#000" stroke-width="1.4"/>
<path d="M180 60 L191 55 L201 58 L190 63 Z" fill="#555" stroke="#000"/>
<path d="M182 65 L189 69 M182 62.5 L190 66" stroke="#222" stroke-width="1.2"/>
<!-- 7 flask -->
<path d="M214 50 L219 50 L219 57 L224 70 L210 70 L214 57 Z" fill="#20c020" stroke="#000"/>
<path d="M214.5 50 L218.5 50 L218.5 57 L216.5 57 Z" fill="#2a7ab0"/>
<rect x="222.5" y="59.5" width="11" height="13" fill="#fffff0" stroke="#000"/>
<path d="M224 63h8M224 66h8M224 69h8" stroke="#555" stroke-dasharray="1.5 1"/>
<rect x="222.5" y="59" width="11" height="2" fill="#e0c020"/>
<!-- 8 help -->
<path d="M245.5 56 C245.5 50 250 48.5 253 48.5 C257.5 48.5 260.5 51 260.5 55 C260.5 59 255.5 60 254.5 62 L254.5 64.5 L250 64.5 L250 61.5 C250 58 256 57 256 55 C256 53 255 52.5 253 52.5 C251 52.5 250 53.5 250 56 Z" fill="#18a018" stroke="#004000" stroke-width="1.2"/>
<ellipse cx="252.3" cy="69.5" rx="2.8" ry="2.5" fill="#18a018" stroke="#004000" stroke-width="1.2"/>
<rect x="271" y="48" width="1" height="26" fill="#a0a0a0"/>
<!-- 9 stop / 10 run -->
<circle cx="294" cy="61" r="12" fill="#a0a0a0"/>
<text x="294" y="65" font-family="Liberation Sans" font-size="8.5" font-weight="bold" fill="#e8e8e8" text-anchor="middle">STOP</text>
<circle cx="325" cy="61" r="12" fill="#a0a0a0"/>
<text x="325" y="65" font-family="Liberation Sans" font-size="9" font-weight="bold" fill="#e8e8e8" text-anchor="middle">RUN</text>
<!-- 11 instrument gray -->
<g fill="none" stroke="#a8a8a8" stroke-width="1.3"><path d="M347 51 L350 51 L350 70 M345 71 L360 71 L360 73 L345 73 Z"/><rect x="351" y="54" width="10" height="4"/><path d="M357 59 L365 59 L365 72 M358 62h7M358 65h7M358 68h7"/></g>
<rect x="374" y="48" width="1" height="26" fill="#a0a0a0"/>
<!-- 12 OFF -->
<circle cx="397" cy="61" r="12" fill="#d8d800"/>
<text x="397" y="64.5" font-family="Liberation Sans" font-size="8" font-weight="bold" fill="#222" text-anchor="middle">OFF</text>
<!-- 13 pipe gray -->
<g fill="none" stroke="#a0a0a0" stroke-width="1.3"><rect x="417.5" y="54.5" width="5" height="5"/><path d="M423 56h7v5h-4v4h8"/></g>
<path d="M431 65 L440 65 L440 70 L435 70 Z" fill="#a0a0a0"/>
<rect x="446" y="48" width="1" height="26" fill="#a0a0a0"/>
<!-- 14 gray icons -->
<g fill="#a0a0a0">
<rect x="459" y="66" width="20" height="5"/>
<path d="M462 51 L466 51 L468 55 L476 63 L477 66 L461 66 L463 62 L466 58 L462 55Z"/>
<rect x="493" y="68" width="19" height="5"/><path d="M488 73 L491 68 L493 68 L493 73Z"/>
<path d="M494 53 Q500 48 506 53 L506 58 Q503 61 502 62 L498 62 Q497 61 494 58Z"/>
<rect x="524" y="52" width="14" height="18"/>
<path d="M559 72 L563 66 L567 58 L567 50 L573 50 L573 58 L578 66 L582 72Z" fill="none" stroke="#a0a0a0" stroke-width="1.6"/>
<path d="M562 70 L566 64 L574 64 L579 70Z"/>
<rect x="600.5" y="50.5" width="6" height="22" rx="3" fill="none" stroke="#a0a0a0" stroke-width="1.5"/>
<rect x="602" y="57" width="3" height="14" rx="1.5"/>
</g>
<g fill="#e8e8e8"><rect x="460" y="67" width="2" height="1"/><rect x="464" y="67" width="2" height="1"/><rect x="468" y="67" width="2" height="1"/><rect x="472" y="67" width="2" height="1"/><rect x="476" y="67" width="2" height="1"/><rect x="460" y="69" width="2" height="1"/><rect x="464" y="69" width="2" height="1"/><rect x="468" y="69" width="2" height="1"/><rect x="472" y="69" width="2" height="1"/><rect x="476" y="69" width="2" height="1"/></g>
<path d="M468 56 L477 60" stroke="#e0e0e0" stroke-width="1.2"/>
<ellipse cx="500" cy="65" rx="3" ry="1.6" fill="none" stroke="#a0a0a0" stroke-width="1.2"/>
<path d="M499 58 L505 52" stroke="#f0f0f0" stroke-width="1.2"/>
<path d="M530 61 L533 64 L541 53" stroke="#f0f0f0" stroke-width="1.5" fill="none"/>
<path d="M577 56 Q583 60 580 66" stroke="#a0a0a0" stroke-width="2" fill="none"/><path d="M577 66 L583 67 L581 62Z" fill="#a0a0a0"/>
<rect x="549" y="48" width="1" height="26" fill="#a0a0a0"/>
<!-- toolbar end cap & grip -->
<rect x="619" y="44" width="6" height="33" fill="#dfe5f0"/>
<rect x="625" y="44" width="1" height="33" fill="#8a8a8a"/>
<rect x="626" y="44" width="8" height="33" fill="#e6ebf4"/>
<g fill="#8090b0"><rect x="629" y="47" width="2" height="2"/><rect x="629" y="51" width="2" height="2"/><rect x="629" y="55" width="2" height="2"/><rect x="629" y="59" width="2" height="2"/><rect x="629" y="63" width="2" height="2"/><rect x="629" y="67" width="2" height="2"/><rect x="629" y="71" width="2" height="2"/></g>
<!-- 16 window icons -->
<g fill="#a0a0a0">
<path d="M642 53h19v15h-19z M652 56v6h8v-6z" fill-rule="evenodd"/>
<path d="M673 53h19v15h-19z M683 56v6h8v-6z" fill-rule="evenodd"/>
<path d="M704 53h19v15h-19z M714 56v6h8v-6z" fill-rule="evenodd"/>
<path d="M735 53h19v15h-19z M745 56v6h8v-6z" fill-rule="evenodd"/>
</g>
</svg>
<!-- doc tab icon + menu icon -->
<svg class="a" style="left:0;top:0" width="30" height="100">
<path d="M9.5 24.5 L17.5 24.5 L21.5 28.5 L21.5 38.5 L9.5 38.5 Z" fill="#fff" stroke="#000"/>
<path d="M12 36 L17 31" stroke="#b09010" stroke-width="2.5"/><circle cx="17.5" cy="31" r="2" fill="#d0b020"/>
<path d="M9.5 82.5 L17.5 82.5 L21.5 86.5 L21.5 97.5 L9.5 97.5 Z" fill="#fff" stroke="#000"/>
<path d="M12 95 L17 90" stroke="#b09010" stroke-width="2.5"/><circle cx="17.5" cy="90" r="2" fill="#d0b020"/>
</svg>

<div class="a" style="left:25px;top:180px;width:26px;height:26px;border:1px solid #7c7c7c;border-radius:3px;background:linear-gradient(160deg,#fafafa 0%,#f0f0f0 45%,#d8d8d8 75%,#cfcfcf 100%);box-shadow:inset 0 0 0 1px rgba(255,255,255,.5)"></div><svg class="a" style="left:25px;top:180px" width="26" height="26"><path d="M4 8 Q4 4 8 4 L17 4 Q21 4 21 8 L21 17 Q21 21 17 21 L8 21 Q4 21 4 17Z" fill="#c8c8c8"/><path d="M5 14 Q8 10 12 13 Q17 9 20 14 Q21 20 15 20 L9 20 Q4 20 5 14Z" fill="#fff"/><path d="M6 6 Q12 3 19 6 L15 9 Q12 8 9 9Z" fill="#e8e8e8"/><path d="M8.5 12 L12.5 8 L16.5 12 M8.5 16 L12.5 12 L16.5 16" fill="none" stroke="#1a7070" stroke-width="1.8"/></svg>
<div class="a" style="left:53px;top:180px;width:13px;height:26px;border:1px solid #b8b8b8;border-radius:3px;background:linear-gradient(160deg,#fafafa,#ececec);box-shadow:inset 0 0 0 1px rgba(255,255,255,.5)"></div><svg class="a" style="left:53px;top:180px" width="13" height="26"><path d="M7 8 L3.5 12 L7 16 M10.5 8 L7 12 L10.5 16" fill="none" stroke="#7abf8a" stroke-width="1.3"/></svg>
<div class="a" style="left:68px;top:180px;width:13px;height:26px;border:1px solid #b8b8b8;border-radius:3px;background:linear-gradient(160deg,#fafafa,#ececec);box-shadow:inset 0 0 0 1px rgba(255,255,255,.5)"></div><svg class="a" style="left:68px;top:180px" width="13" height="26"><path d="M2.5 8 L6 12 L2.5 16 M6 8 L9.5 12 L6 16" fill="none" stroke="#7abf8a" stroke-width="1.3"/></svg>
<div class="a" style="left:93px;top:180px;width:26px;height:26px;border:1px solid #7c7c7c;border-radius:3px;background:linear-gradient(160deg,#fafafa 0%,#f0f0f0 45%,#d8d8d8 75%,#cfcfcf 100%);box-shadow:inset 0 0 0 1px rgba(255,255,255,.5)"></div><svg class="a" style="left:93px;top:180px" width="26" height="26"><rect x="4.5" y="4.5" width="14" height="16" rx="1" fill="#888" stroke="#000" stroke-width="1.5"/><rect x="8" y="3" width="8" height="4" fill="#e8e890" stroke="#000"/><text x="4.5" y="17.5" font-family="Liberation Sans" font-size="8" font-weight="bold" fill="#e01818">12</text><path d="M12.5 11.5 L18.5 11.5 L21.5 14.5 L21.5 22.5 L12.5 22.5Z" fill="#fff" stroke="#000" stroke-width="1.3"/><text x="13" y="17.5" font-family="Liberation Sans" font-size="7.5" font-weight="bold" fill="#e01818">3</text><path d="M18 13 L21 15 L18 17Z" fill="#e01818"/></svg>
<div class="a" style="left:121px;top:180px;width:26px;height:26px;border:1px solid #7c7c7c;border-radius:3px;background:linear-gradient(160deg,#fafafa 0%,#f0f0f0 45%,#d8d8d8 75%,#cfcfcf 100%);box-shadow:inset 0 0 0 1px rgba(255,255,255,.5)"></div><svg class="a" style="left:121px;top:180px" width="26" height="26"><rect x="4.5" y="4.5" width="14" height="16" rx="1" fill="#888" stroke="#000" stroke-width="1.5"/><rect x="8" y="3" width="8" height="4" fill="#e8e890" stroke="#000"/><path d="M12.5 11.5 L18.5 11.5 L21.5 14.5 L21.5 22.5 L12.5 22.5Z" fill="#fff" stroke="#000" stroke-width="1.3"/></svg>
<div class="a" style="left:159px;top:180px;width:26px;height:26px;border:1px solid #7c7c7c;border-radius:3px;background:linear-gradient(160deg,#fafafa 0%,#f0f0f0 45%,#d8d8d8 75%,#cfcfcf 100%);box-shadow:inset 0 0 0 1px rgba(255,255,255,.5)"></div><svg class="a" style="left:159px;top:180px" width="26" height="26"><circle cx="12" cy="11" r="5.5" fill="#a8dede" stroke="#000" stroke-width="1.5"/><path d="M12 8v6M9 11h6" stroke="#000" stroke-width="1"/><path d="M15.5 15 L20.5 20" stroke="#000" stroke-width="2.2"/><path d="M12 2 L10 5 L14 5Z M12 20 L10 17 L14 17Z M3 11 L6 9 L6 13Z M21 11 L18 9 L18 13Z" fill="#000"/></svg>
<div class="a" style="left:187px;top:180px;width:26px;height:26px;border:1px solid #7c7c7c;border-radius:3px;background:linear-gradient(160deg,#fafafa 0%,#f0f0f0 45%,#d8d8d8 75%,#cfcfcf 100%);box-shadow:inset 0 0 0 1px rgba(255,255,255,.5)"></div><svg class="a" style="left:187px;top:180px" width="26" height="26"><g opacity="1" shape-rendering="crispEdges"><path d="M2.5 4v19M4.5 6v17M6.5 3v20M8.5 8v15" stroke="#e82020" stroke-width="1"/><path d="M2 19.5h20" stroke="#e82020" stroke-width="1"/></g><path d="M15.5 5.5h3l1 1h3v6h-7z" fill="#7a7a20" stroke="#303010" stroke-width=".8"/><path d="M14 11 L10 7" stroke="#000" stroke-width="1.6"/><path d="M8.5 5.5 L13 6 L9 10Z" fill="#000"/><path d="M14 13 L10 17" stroke="#000" stroke-width="1.6"/><path d="M8.5 18.5 L9 14 L13 18Z" fill="#000"/><path d="M17 13 L21 17" stroke="#000" stroke-width="1.6"/><path d="M22.5 18.5 L18 18 L22 14Z" fill="#000"/></svg>
<div class="a" style="left:215px;top:180px;width:26px;height:26px;border:1px solid #1a4a70;border-radius:3px;background:linear-gradient(#bcdcf4 0%,#a6d0f0 50%,#6ab2e8 100%);box-shadow:inset 0 0 0 1px rgba(255,255,255,.5)"></div><svg class="a" style="left:215px;top:180px" width="26" height="26"><g opacity="1" shape-rendering="crispEdges"><path d="M2.5 4v19M4.5 6v17M6.5 3v20M8.5 8v15" stroke="#e82020" stroke-width="1"/><path d="M2 19.5h20" stroke="#e82020" stroke-width="1"/></g><path d="M15.5 5.5h3l1 1h3v6h-7z" fill="#7a7a20" stroke="#303010" stroke-width=".8"/><path d="M14 11 L10 7" stroke="#000" stroke-width="1.6"/><path d="M8.5 5.5 L13 6 L9 10Z" fill="#000"/><path d="M21 17 L18 14" stroke="#000" stroke-width="1.6"/><path d="M3 16.5h5" stroke="#000" stroke-width="1.4"/><path d="M8.5 13.5 L8.5 19.5 L11 18 L15 18 L15 15 L11 15Z" fill="#fff" stroke="#000" stroke-width="1.1"/><path d="M15 16.5h3" stroke="#000" stroke-width="1.4"/></svg>
<div class="a" style="left:243px;top:180px;width:26px;height:26px;border:1px solid #b8b8b8;border-radius:3px;background:linear-gradient(160deg,#fafafa,#ececec);box-shadow:inset 0 0 0 1px rgba(255,255,255,.5)"></div><svg class="a" style="left:243px;top:180px" width="26" height="26"><g opacity="0.35" shape-rendering="crispEdges"><path d="M2.5 4v19M4.5 6v17M6.5 3v20M8.5 8v15" stroke="#e82020" stroke-width="1"/><path d="M2 19.5h20" stroke="#e82020" stroke-width="1"/></g><path d="M15.5 5.5h3l1 1h3v6h-7z" fill="#b8b888"/><path d="M14 11 L9 6 M14 13 L9 18 M17 13 L22 18" stroke="#909090" stroke-width="1.6"/><path d="M2 20 L6 16.5 L6 18.5 L11 18.5 L11 21.5 L6 21.5 L6 23.5Z" fill="#70d0e8"/></svg>
<div class="a" style="left:271px;top:180px;width:26px;height:26px;border:1px solid #7c7c7c;border-radius:3px;background:linear-gradient(160deg,#fafafa 0%,#f0f0f0 45%,#d8d8d8 75%,#cfcfcf 100%);box-shadow:inset 0 0 0 1px rgba(255,255,255,.5)"></div><svg class="a" style="left:271px;top:180px" width="26" height="26"><g opacity="1" shape-rendering="crispEdges"><path d="M2.5 4v19M4.5 6v17M6.5 3v20M8.5 8v15" stroke="#e82020" stroke-width="1"/><path d="M2 19.5h20" stroke="#e82020" stroke-width="1"/></g><path d="M15.5 5.5h3l1 1h3v6h-7z" fill="#7a7a20" stroke="#303010" stroke-width=".8"/><path d="M14 11 L10 7" stroke="#000" stroke-width="1.6"/><path d="M8.5 5.5 L13 6 L9 10Z" fill="#000"/><path d="M14 13 L10 17" stroke="#000" stroke-width="1.6"/><path d="M8.5 18.5 L9 14 L13 18Z" fill="#000"/><path d="M13.5 10 L13.5 17 L11.5 15.5 L12.5 21.5 L19.5 21.5 L20.5 15.5 L15.5 14 L15.5 10Z" fill="#fff" stroke="#000" stroke-width="1"/></svg>
<div class="a" style="left:309px;top:180px;width:26px;height:26px;border:1px solid #7c7c7c;border-radius:3px;background:linear-gradient(160deg,#fafafa 0%,#f0f0f0 45%,#d8d8d8 75%,#cfcfcf 100%);box-shadow:inset 0 0 0 1px rgba(255,255,255,.5)"></div><svg class="a" style="left:309px;top:180px" width="26" height="26"><rect x="3.5" y="6.5" width="18" height="12" fill="#fff" stroke="#000" stroke-width="1"/><rect x="4" y="7" width="17" height="3" fill="#777"/><path d="M4 13h17M4 16h17" stroke="#999" stroke-width="1"/><rect x="4" y="10" width="17" height="8" fill="#999" opacity=".6"/><path d="M4 12.5h17M4 15.5h17M9.5 10v8M15.5 10v8" stroke="#fff" stroke-width="1"/></svg>
<div class="a" style="left:337px;top:180px;width:26px;height:26px;border:1px solid #7c7c7c;border-radius:3px;background:linear-gradient(160deg,#fafafa 0%,#f0f0f0 45%,#d8d8d8 75%,#cfcfcf 100%);box-shadow:inset 0 0 0 1px rgba(255,255,255,.5)"></div><svg class="a" style="left:337px;top:180px" width="26" height="26"><rect x="2.5" y="3.5" width="20" height="16" fill="#c8c8c8" stroke="#000" stroke-width="1.4"/><path d="M3 17h19 M3 17 L6 17 L7 8 L8 6 L9 10 L10 16" stroke="#e02040" stroke-width="1.2" fill="none"/><rect x="13.5" y="5.5" width="6" height="7" fill="#fff" stroke="#000"/><path d="M15 7h1M17 7h1M15 9h1M17 9h1M15 11h1M17 11h1" stroke="#000"/></svg>
<div class="a" style="left:375px;top:180px;width:26px;height:26px;border:1px solid #7c7c7c;border-radius:3px;background:linear-gradient(160deg,#fafafa 0%,#f0f0f0 45%,#d8d8d8 75%,#cfcfcf 100%);box-shadow:inset 0 0 0 1px rgba(255,255,255,.5)"></div><svg class="a" style="left:375px;top:180px" width="26" height="26"><rect x="5.5" y="3.5" width="13" height="16" fill="#d8d8f0" stroke="#000" stroke-width="1.3"/><rect x="6" y="4" width="12" height="2.5" fill="#2020a0"/><path d="M8 9h8M8 12h7M8 15h6" stroke="#2a4ab0" stroke-width="1"/><path d="M14 12 L14 23 L17 20 L20 24 L21 23 L19 19 L23 19Z" fill="#d8d020" stroke="#505000" stroke-width=".8"/></svg>
<div class="a" style="left:413px;top:180px;width:26px;height:26px;border:1px solid #7c7c7c;border-radius:3px;background:linear-gradient(160deg,#fafafa 0%,#f0f0f0 45%,#d8d8d8 75%,#cfcfcf 100%);box-shadow:inset 0 0 0 1px rgba(255,255,255,.5)"></div><svg class="a" style="left:413px;top:180px" width="26" height="26"><rect x="2.5" y="3.5" width="12" height="9" fill="#fff" stroke="#000" stroke-width="1.3"/><path d="M4 10 L7 6 L10 9 L13 8" stroke="#000" fill="none" stroke-width=".8"/><rect x="10.5" y="10.5" width="12" height="10" fill="#fff" stroke="#000" stroke-width="1.3"/><path d="M12 18 L15 14 L18 17 L21 15" stroke="#000" fill="none" stroke-width=".8"/></svg>
<div class="a" style="left:441px;top:180px;width:26px;height:26px;border:1px solid #b8b8b8;border-radius:3px;background:linear-gradient(160deg,#fafafa,#ececec);box-shadow:inset 0 0 0 1px rgba(255,255,255,.5)"></div><svg class="a" style="left:441px;top:180px" width="26" height="26"><rect x="2.5" y="5.5" width="20" height="13" fill="#fff" stroke="#a0a0b0" stroke-width="1"/><path d="M4 15 L8 13 L10 12 L12 13 L12.5 8 L13 13 L16 11 L21 12" stroke="#6060b0" fill="none" stroke-width=".7"/><path d="M13 7v9" stroke="#c05050" stroke-width=".8"/></svg>
<div class="a" style="left:988px;top:180px;width:28px;height:29px;border:1px solid #8c8c8c;border-radius:3px;background:linear-gradient(160deg,#fafafa 0%,#efefef 50%,#dadada 75%,#d0d0d0 100%);box-shadow:inset 0 0 0 1px rgba(255,255,255,.5)"></div><svg class="a" style="left:988px;top:180px" width="28" height="29"><path d="M4.5 9.5 L7.5 6.5 L23.5 6.5 L23.5 20.5 L4.5 20.5Z" fill="#c0e0c0" stroke="#000" stroke-width="1.5"/><path d="M7 9v10M10 9v10M13 9v10M16 9v10M19 9v10" stroke="#1a8a1a" stroke-width="2"/><path d="M21 9v10" stroke="#30e030" stroke-width="2"/></svg>
<div class="a" style="left:1018px;top:180px;width:28px;height:29px;border:1px solid #8c8c8c;border-radius:3px;background:linear-gradient(160deg,#fafafa 0%,#efefef 50%,#dadada 75%,#d0d0d0 100%);box-shadow:inset 0 0 0 1px rgba(255,255,255,.5)"></div><svg class="a" style="left:1018px;top:180px" width="28" height="29"><path d="M4.5 9.5 L7.5 6.5 L23.5 6.5 L23.5 20.5 L4.5 20.5Z" fill="#c0e0c0" stroke="#000" stroke-width="1.5"/><path d="M7 9v10M16 9v10M19 9v10" stroke="#1a8a1a" stroke-width="2"/><path d="M10.5 8v11" stroke="#0a1a80" stroke-width="3"/><path d="M21 9v10" stroke="#30e030" stroke-width="2"/><path d="M11 13 L11 23 L13.5 21 L16 25 L17.5 24 L15.5 20 L19 20Z" fill="#fff" stroke="#000" stroke-width=".9"/></svg>
<div class="a" style="left:1048px;top:180px;width:28px;height:29px;border:1px solid #8c8c8c;border-radius:3px;background:linear-gradient(160deg,#fafafa 0%,#efefef 50%,#dadada 75%,#d0d0d0 100%);box-shadow:inset 0 0 0 1px rgba(255,255,255,.5)"></div><svg class="a" style="left:1048px;top:180px" width="28" height="29"><path d="M4.5 9.5 L7.5 6.5 L23.5 6.5 L23.5 20.5 L4.5 20.5Z" fill="#c0e0c0" stroke="#000" stroke-width="1.5"/><path d="M7 9v10M16 9v10M19 9v10" stroke="#1a8a1a" stroke-width="2"/><path d="M11 7v13" stroke="#1a2a90" stroke-width="3"/><path d="M21 9v10" stroke="#30e030" stroke-width="2"/><path d="M10 12 L10 20 L8 19 L9 24 L16 24 L17 18 L12 17 L12 12Z" fill="#fff" stroke="#000" stroke-width=".9"/></svg>
<div class="a" style="left:1096px;top:180px;width:28px;height:29px;border:1px solid #8c8c8c;border-radius:3px;background:linear-gradient(160deg,#fafafa 0%,#efefef 50%,#dadada 75%,#d0d0d0 100%);box-shadow:inset 0 0 0 1px rgba(255,255,255,.5)"></div><svg class="a" style="left:1096px;top:180px" width="28" height="29"><rect x="3.5" y="3.5" width="18" height="20" fill="#c8c8c8" stroke="#000" stroke-width="1.6"/><rect x="4" y="4" width="17" height="2" fill="#208020"/><path d="M6 9h13M6 12h13M6 15h13M6 18h10" stroke="#888" stroke-width="1" stroke-dasharray="2 1"/><path d="M18 23 L22 19 L22 23Z" fill="#555"/></svg>
<div class="a" style="left:1126px;top:180px;width:28px;height:29px;border:1px solid #b8b8b8;border-radius:3px;background:linear-gradient(160deg,#fafafa,#ececec);box-shadow:inset 0 0 0 1px rgba(255,255,255,.5)"></div><svg class="a" style="left:1126px;top:180px" width="28" height="29"><path d="M3 3 L13 3 L16 6 L16 18 L3 18Z" fill="#90e090" opacity=".8"/><circle cx="13" cy="14" r="6" fill="#80d880" stroke="#a0c0a0"/><circle cx="12" cy="11" r="1.5" fill="#60b060"/><circle cx="13" cy="17" r="1.5" fill="#60b060"/><path d="M17 18 L22 23" stroke="#888" stroke-width="2"/></svg>
<div class="a" style="left:1156px;top:180px;width:28px;height:29px;border:1px solid #8c8c8c;border-radius:3px;background:linear-gradient(160deg,#fafafa 0%,#efefef 50%,#dadada 75%,#d0d0d0 100%);box-shadow:inset 0 0 0 1px rgba(255,255,255,.5)"></div><svg class="a" style="left:1156px;top:180px" width="28" height="29"><rect x="4.5" y="4.5" width="14" height="16" rx="1" fill="#888" stroke="#000" stroke-width="1.5"/><rect x="8" y="3" width="8" height="4" fill="#e8e890" stroke="#000"/><path d="M12.5 11.5 L18.5 11.5 L21.5 14.5 L21.5 22.5 L12.5 22.5Z" fill="#fff" stroke="#000" stroke-width="1.3"/></svg>
<div class="a" style="left:1201px;top:180px;width:28px;height:29px;border:1px solid #8c8c8c;border-radius:3px;background:linear-gradient(160deg,#fafafa 0%,#efefef 50%,#dadada 75%,#d0d0d0 100%);box-shadow:inset 0 0 0 1px rgba(255,255,255,.5)"></div><svg class="a" style="left:1201px;top:180px" width="28" height="29"><path d="M2.5 2.5 L11.5 2.5 L14 5 L14 16 L2.5 16Z" fill="#20c020" stroke="#000"/><path d="M13 3 Q20 3 20 10 L22 10 L18 14 L14 10 L16 10 Q16 6 13 6Z" fill="#20a020" stroke="#000" stroke-width=".7"/><rect x="8.5" y="12.5" width="10" height="11" fill="#d8d8d8" stroke="#000"/><rect x="10.5" y="14.5" width="10" height="10" fill="#e0e0e0" stroke="#000"/><path d="M12 17h7M12 19h7M12 21h7" stroke="#777"/></svg>
<div class="a" style="left:1231px;top:180px;width:28px;height:29px;border:1px solid #8c8c8c;border-radius:3px;background:linear-gradient(160deg,#fafafa 0%,#efefef 50%,#dadada 75%,#d0d0d0 100%);box-shadow:inset 0 0 0 1px rgba(255,255,255,.5)"></div><svg class="a" style="left:1231px;top:180px" width="28" height="29"><text x="2" y="19" font-family="Liberation Serif" font-size="17" fill="#a01818">Σ</text><text x="12" y="18" font-family="Liberation Serif" font-size="14" font-weight="bold" font-style="italic" fill="#000">f</text><text x="17" y="18" font-family="Liberation Sans" font-size="7" fill="#000">(x)</text></svg>
<div class="a" style="left:1261px;top:180px;width:28px;height:29px;border:1px solid #8c8c8c;border-radius:3px;background:linear-gradient(160deg,#fafafa 0%,#efefef 50%,#dadada 75%,#d0d0d0 100%);box-shadow:inset 0 0 0 1px rgba(255,255,255,.5)"></div><svg class="a" style="left:1261px;top:180px" width="28" height="29"><path d="M13.5 3v21M3 14h21M3 22.5h21" stroke="#000" stroke-width="1"/><text x="3" y="10" font-family="Liberation Sans" font-size="6.5" font-weight="bold" fill="#0a1aa0">All</text><text x="17" y="10" font-family="Liberation Sans" font-size="7" font-weight="bold" fill="#0a1aa0">1</text><text x="5" y="19" font-family="Liberation Sans" font-size="7" font-weight="bold" fill="#0a1aa0">A</text><text x="15" y="19" font-family="Liberation Sans" font-size="6" font-weight="bold" fill="#0a1aa0">xx</text></svg>
<div class="a" style="left:1291px;top:180px;width:28px;height:29px;border:1px solid #8c8c8c;border-radius:3px;background:linear-gradient(160deg,#fafafa 0%,#efefef 50%,#dadada 75%,#d0d0d0 100%);box-shadow:inset 0 0 0 1px rgba(255,255,255,.5)"></div><svg class="a" style="left:1291px;top:180px" width="28" height="29"><path d="M2 16 L8 10 L12 13 L18 6 L24 10" stroke="#e8e800" stroke-width="2" fill="none"/><text x="2" y="19" font-family="Liberation Serif" font-size="17" fill="#a01818">Σ</text><text x="12" y="18" font-family="Liberation Serif" font-size="14" font-weight="bold" font-style="italic" fill="#000">f</text><text x="17" y="18" font-family="Liberation Sans" font-size="7" fill="#000">(x)</text></svg>
<div class="a" style="left:22px;top:611px;width:26px;height:26px;border:1px solid #7c7c7c;border-radius:3px;background:linear-gradient(160deg,#fafafa 0%,#f0f0f0 45%,#d8d8d8 75%,#cfcfcf 100%);box-shadow:inset 0 0 0 1px rgba(255,255,255,.5)"></div><svg class="a" style="left:22px;top:611px" width="26" height="26"><path d="M4 8 Q4 4 8 4 L17 4 Q21 4 21 8 L21 17 Q21 21 17 21 L8 21 Q4 21 4 17Z" fill="#c8c8c8"/><path d="M5 14 Q8 10 12 13 Q17 9 20 14 Q21 20 15 20 L9 20 Q4 20 5 14Z" fill="#fff"/><path d="M6 6 Q12 3 19 6 L15 9 Q12 8 9 9Z" fill="#e8e8e8"/><path d="M8.5 12 L12.5 8 L16.5 12 M8.5 16 L12.5 12 L16.5 16" fill="none" stroke="#1a7070" stroke-width="1.8"/></svg>
<div class="a" style="left:50px;top:611px;width:13px;height:26px;border:1px solid #b8b8b8;border-radius:3px;background:linear-gradient(160deg,#fafafa,#ececec);box-shadow:inset 0 0 0 1px rgba(255,255,255,.5)"></div><svg class="a" style="left:50px;top:611px" width="13" height="26"><path d="M7 8 L3.5 12 L7 16 M10.5 8 L7 12 L10.5 16" fill="none" stroke="#7abf8a" stroke-width="1.3"/></svg>
<div class="a" style="left:65px;top:611px;width:13px;height:26px;border:1px solid #b8b8b8;border-radius:3px;background:linear-gradient(160deg,#fafafa,#ececec);box-shadow:inset 0 0 0 1px rgba(255,255,255,.5)"></div><svg class="a" style="left:65px;top:611px" width="13" height="26"><path d="M2.5 8 L6 12 L2.5 16 M6 8 L9.5 12 L6 16" fill="none" stroke="#7abf8a" stroke-width="1.3"/></svg>
<div class="a" style="left:90px;top:611px;width:26px;height:26px;border:1px solid #7c7c7c;border-radius:3px;background:linear-gradient(160deg,#fafafa 0%,#f0f0f0 45%,#d8d8d8 75%,#cfcfcf 100%);box-shadow:inset 0 0 0 1px rgba(255,255,255,.5)"></div><svg class="a" style="left:90px;top:611px" width="26" height="26"><rect x="4.5" y="4.5" width="14" height="16" rx="1" fill="#888" stroke="#000" stroke-width="1.5"/><rect x="8" y="3" width="8" height="4" fill="#e8e890" stroke="#000"/><text x="4.5" y="17.5" font-family="Liberation Sans" font-size="8" font-weight="bold" fill="#e01818">12</text><path d="M12.5 11.5 L18.5 11.5 L21.5 14.5 L21.5 22.5 L12.5 22.5Z" fill="#fff" stroke="#000" stroke-width="1.3"/><text x="13" y="17.5" font-family="Liberation Sans" font-size="7.5" font-weight="bold" fill="#e01818">3</text><path d="M18 13 L21 15 L18 17Z" fill="#e01818"/></svg>
<div class="a" style="left:128px;top:611px;width:26px;height:26px;border:1px solid #7c7c7c;border-radius:3px;background:linear-gradient(160deg,#fafafa 0%,#f0f0f0 45%,#d8d8d8 75%,#cfcfcf 100%);box-shadow:inset 0 0 0 1px rgba(255,255,255,.5)"></div><svg class="a" style="left:128px;top:611px" width="26" height="26"><path d="M4 4v18" stroke="#e02020" stroke-dasharray="2 1"/><path d="M2 7 L4 3 L6 7Z" fill="#e02020"/><rect x="7.5" y="5.5" width="3" height="3" fill="none" stroke="#0010c0"/><rect x="7.5" y="11.5" width="3" height="3" fill="none" stroke="#0010c0"/><rect x="7.5" y="17.5" width="3" height="3" fill="none" stroke="#0010c0"/><path d="M13 7h9M13 13h9M13 19h9" stroke="#0010c0" stroke-width="2" stroke-dasharray="2 1"/></svg>
<div class="a" style="left:156px;top:611px;width:26px;height:26px;border:1px solid #7c7c7c;border-radius:3px;background:linear-gradient(160deg,#fafafa 0%,#f0f0f0 45%,#d8d8d8 75%,#cfcfcf 100%);box-shadow:inset 0 0 0 1px rgba(255,255,255,.5)"></div><svg class="a" style="left:156px;top:611px" width="26" height="26"><path d="M4 4v18" stroke="#e02020" stroke-dasharray="2 1"/><path d="M2 19 L4 23 L6 19Z" fill="#e02020"/><rect x="7.5" y="5.5" width="3" height="3" fill="none" stroke="#0010c0"/><rect x="7.5" y="15.5" width="3" height="3" fill="none" stroke="#0010c0"/><path d="M13 7h9M13 11h5M13 17h9M13 21h9" stroke="#0010c0" stroke-width="2" stroke-dasharray="2 1"/></svg>
<div class="a" style="left:184px;top:611px;width:26px;height:26px;border:1px solid #7c7c7c;border-radius:3px;background:linear-gradient(160deg,#fafafa 0%,#f0f0f0 45%,#d8d8d8 75%,#cfcfcf 100%);box-shadow:inset 0 0 0 1px rgba(255,255,255,.5)"></div><svg class="a" style="left:184px;top:611px" width="26" height="26"><path d="M4 5.5h17" stroke="#e02020" stroke-width="1" stroke-dasharray="2 1"/><path d="M2.5 5.5 L6 3 L6 8Z M22.5 5.5 L19 3 L19 8Z" fill="#e02020"/><rect x="3.5" y="9.5" width="18" height="13" fill="#fff"/><rect x="4" y="9" width="17" height="2" fill="#f0e000"/><g shape-rendering="crispEdges" stroke="#000" stroke-width="1"><path d="M3.5 11.5h18M3.5 8.5h18"/><path d="M3.5 9v14M9.5 9v14M15.5 9v14M21.5 9v14"/></g></svg>
<div class="a" style="left:222px;top:611px;width:26px;height:26px;border:1px solid #7c7c7c;border-radius:3px;background:linear-gradient(160deg,#fafafa 0%,#f0f0f0 45%,#d8d8d8 75%,#cfcfcf 100%);box-shadow:inset 0 0 0 1px rgba(255,255,255,.5)"></div><svg class="a" style="left:222px;top:611px" width="26" height="26"><path d="M5.5 2.5 L15.5 2.5 L19.5 6.5 L19.5 23.5 L5.5 23.5Z" fill="#fff" stroke="#000" stroke-width="1.2"/><g shape-rendering="crispEdges" stroke="#10209a" stroke-width="1" stroke-dasharray="2 1"><path d="M7 6.5h8M7 9.5h11M7 12.5h11M7 15.5h11M7 18.5h11M7 21.5h11"/></g><path d="M14 12 L14 23 L17 20 L20 24 L21 23 L19 19 L23 19Z" fill="#d8d020" stroke="#505000" stroke-width=".8"/></svg>
</body></html>
